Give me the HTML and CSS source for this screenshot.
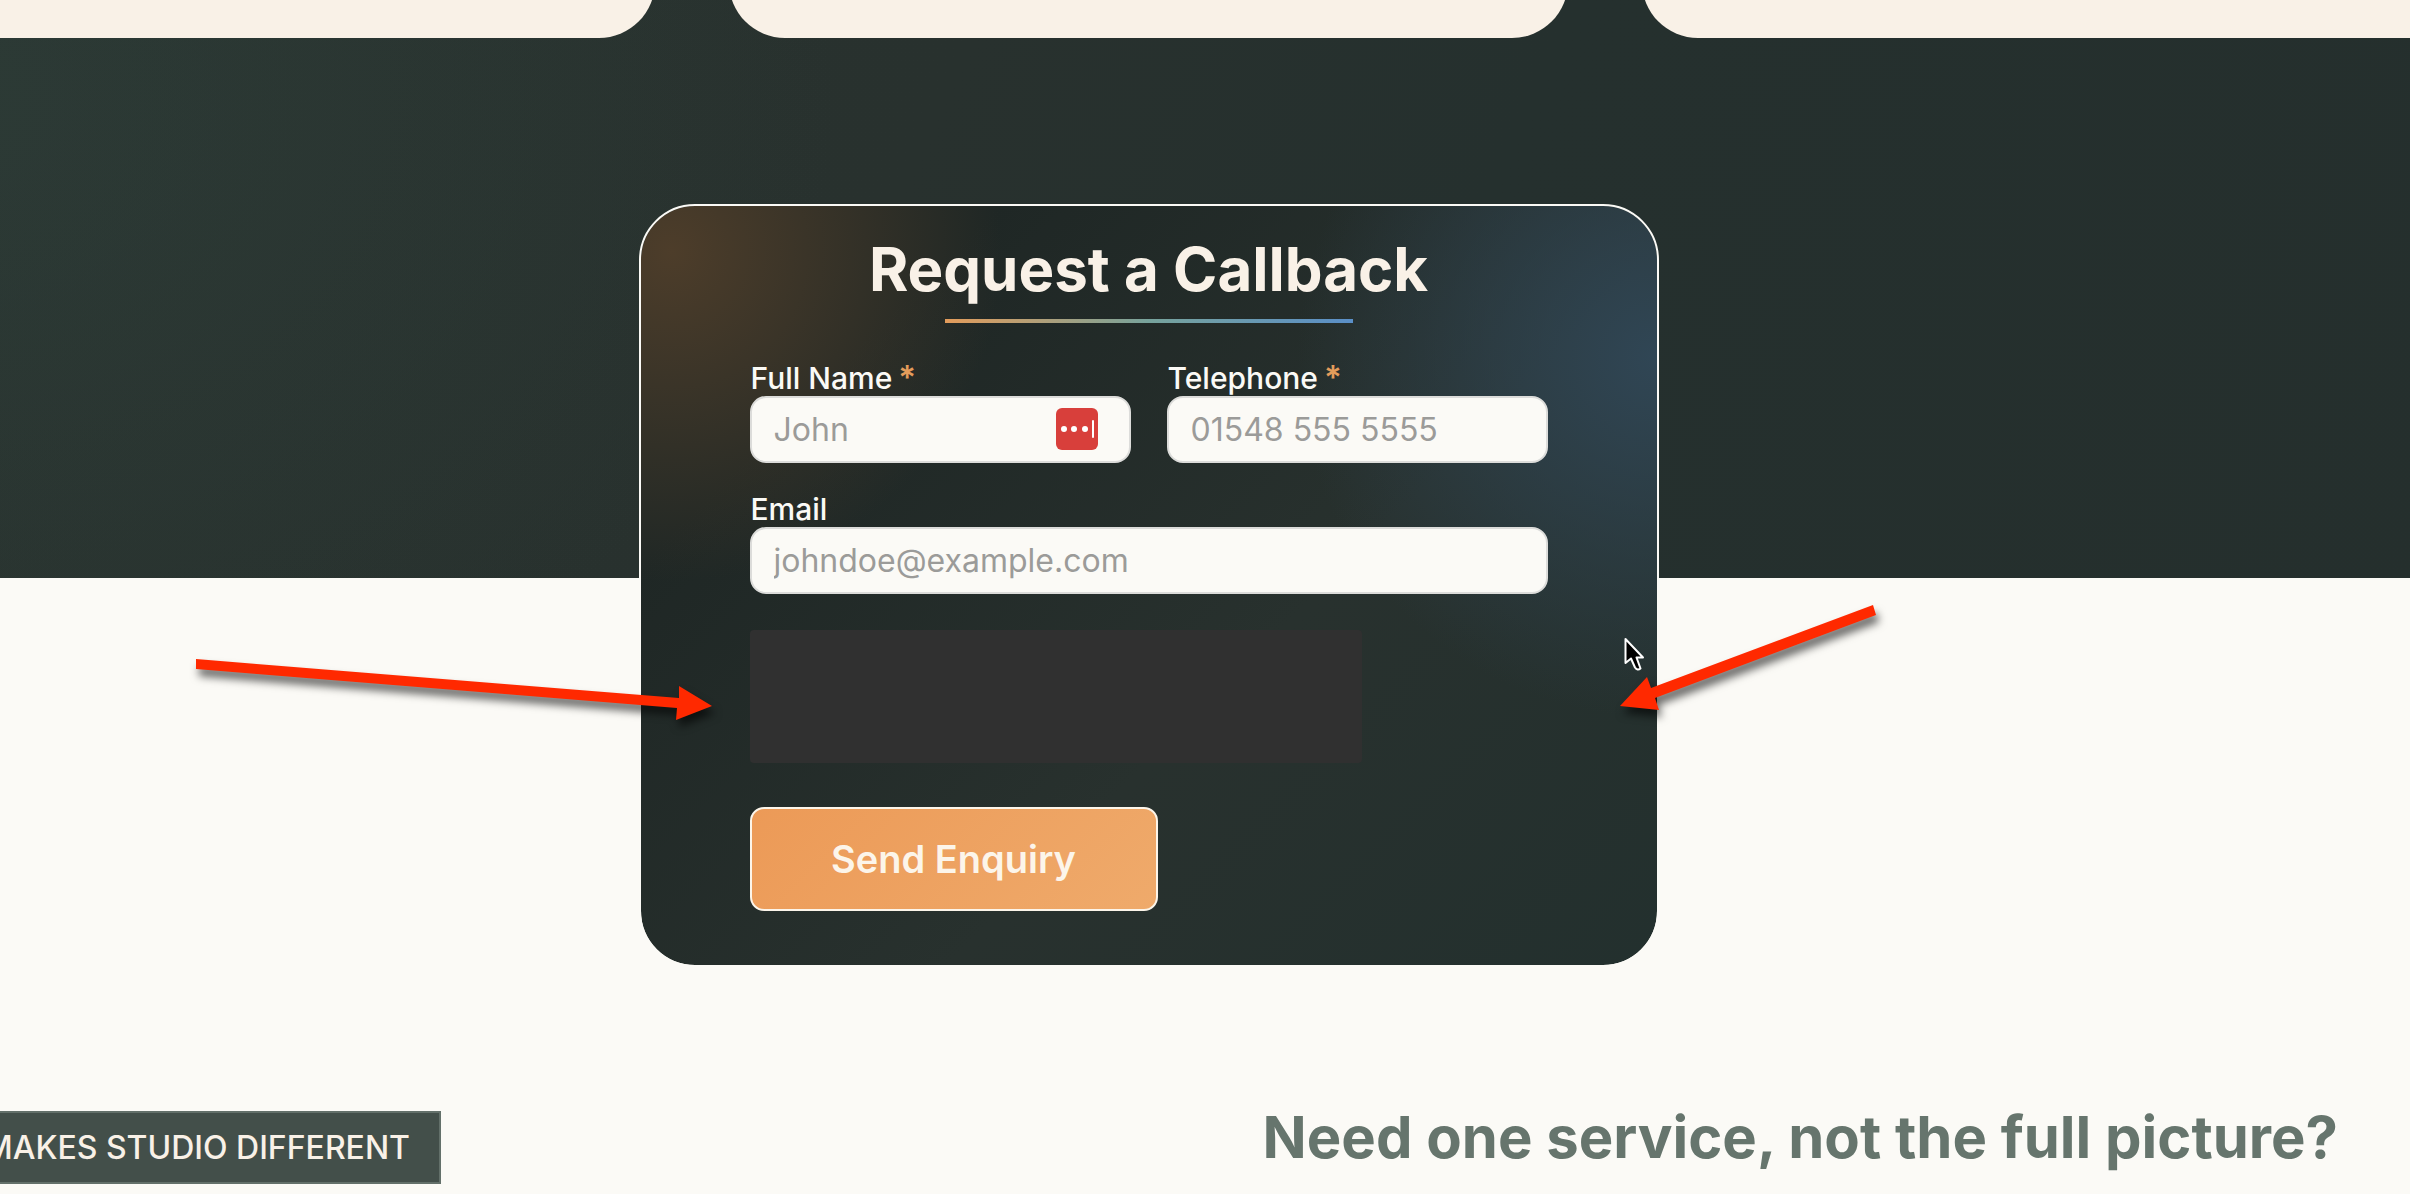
FILE: index.html
```html
<!DOCTYPE html>
<html lang="en">
<head>
    <meta charset="UTF-8">
    <meta name="viewport" content="width=device-width, initial-scale=1.0">
    <title>Request a Callback</title>
    <link rel="stylesheet" href="styles.css">
</head>
<body>
    <div class="page">
        <section class="hero">
            <div class="service-card"></div>
            <div class="service-card"></div>
            <div class="service-card"></div>
        </section>

        <!-- Callback form, overlaps the hero -->
        <section class="callback">
            <h2 class="callback-title">Request a Callback</h2>
            <div class="callback-rule"></div>
            <form class="callback-form">
                <div class="field">
                    <label for="fullName">Full Name<span class="required">*</span></label>
                    <div class="input-wrap">
                        <input type="text" id="fullName" placeholder="John" required>
                        <button type="button" class="autofill" aria-label="Fill from password manager">
                            <svg viewBox="0 0 42 42">
                                <circle cx="8" cy="21" r="3"/>
                                <circle cx="18" cy="21" r="3"/>
                                <circle cx="29" cy="21" r="3"/>
                                <rect x="36" y="12" width="2" height="18" rx="1"/>
                            </svg>
                        </button>
                    </div>
                </div>
                <div class="field">
                    <label for="telephone">Telephone<span class="required">*</span></label>
                    <input type="tel" id="telephone" placeholder="01548 555 5555" required>
                </div>
                <div class="field field-wide">
                    <label for="email">Email</label>
                    <input type="email" id="email" placeholder="johndoe@example.com">
                </div>
                <div class="captcha"></div>
                <button type="submit" class="send">Send Enquiry</button>
            </form>
        </section>
    </div>

    <section class="studio">
        <div class="tag"><span>MAKES STUDIO DIFFERENT</span></div>
        <h2 class="studio-title">Need one service, not the full picture?</h2>
    </section>

    <!-- Arrows and pointer over the page -->
    <svg class="overlay" width="1900" height="760" viewBox="0 0 1900 760" aria-hidden="true">
        <g class="arrow">
            <path d="M196 659 L679 698 L679 686 L712 706 L676 720 L677 708 L196 669 Z"/>
        </g>
        <g class="arrow">
            <path d="M1873 605 L1651 688 L1647 677 L1620 706 L1659 710 L1655 698 L1876 615 Z"/>
        </g>
        <path class="pointer" d="M1625.500 639 V663 L1631 658.500 L1635 667.500 Q1637.500 671 1640.500 668.500 L1636.500 657.500 H1643 Z"/>
    </svg>
</body>
</html>
```
FILE: styles.css
```css
* {
    box-sizing: border-box;
}
body {
    margin: 0;
    position: relative;
    overflow: hidden;
    background-color: #fbfaf6;
    font-family: Inter, "Liberation Sans", sans-serif;
}
h2 {
    margin: 0;
}
.page {
    /* the page runs off both sides of the window */
    margin: 0 -70px 0 -183px;
}
.hero {
    display: grid;
    grid-template-columns: repeat(3, 1fr);
    grid-template-rows: 38px;
    align-items: end;
    gap: 74px;
    padding-bottom: 540px;
    background:
        radial-gradient(ellipse 900px 700px at 120px 100px, rgba(50, 72, 66, 0.35), transparent),
        linear-gradient(115deg, #29332f, #28312e 40%, #25302e 60%, #252f2d);
}
.service-card {
    height: 200px;
    background-color: #f9f1e7;
    border-radius: 56px;
}
.callback {
    max-width: 1020px;
    margin: -374px auto 0;
    padding: 28px 109px 54px;
    border: 2px solid #fbfaf6;
    border-radius: 56px;
    background:
        radial-gradient(circle 330px at 3% 6%, #4d3d2a, transparent),
        radial-gradient(circle 360px at 100% 20%, #304655, transparent),
        linear-gradient(135deg, #1f2725, #1f2725 20%, #28312e 60%, #23302e);
    background-clip: padding-box;
}
.callback-title {
    color: #f9f1e7;
    font-size: 60px;
    line-height: 70px;
    font-weight: 700;
    text-align: center;
}
.callback-rule {
    width: 408px;
    height: 4px;
    margin: 15px auto 37px;
    background: linear-gradient(90deg, #e39c5b, #77a39c 50%, #5a8fc8);
}
.callback-form {
    display: grid;
    grid-template-columns: 1fr 1fr;
    column-gap: 36px;
    row-gap: 28px;
}
.field-wide {
    grid-column: 1 / -1;
}
label {
    display: block;
    height: 36px;
    padding-left: 1px;
    color: #fbfaf6;
    font-size: 30px;
    line-height: 36px;
    font-weight: 500;
}
.required {
    margin-left: 6px;
    color: #e39c5b;
    font-size: 33px;
    line-height: 0;
    font-weight: 600;
}
.input-wrap {
    position: relative;
}
input {
    display: block;
    width: 100%;
    height: 67px;
    padding: 0 22px;
    border: 2px solid #dcdcda;
    border-radius: 16px;
    background-color: #fbfaf6;
    color: #28312e;
    font-family: inherit;
    font-size: 32px;
}
input::placeholder {
    color: #9b9b99;
    opacity: 1;
}
.autofill {
    position: absolute;
    top: 12px;
    right: 33px;
    width: 42px;
    height: 42px;
    padding: 0;
    border: none;
    border-radius: 6px;
    background-color: #d83f3b;
    cursor: pointer;
}
.autofill svg {
    display: block;
    fill: #fff;
}
.captcha {
    grid-column: 1 / -1;
    width: 612px;
    height: 133px;
    margin: 8px 0 16px;
    border-radius: 4px;
    background-color: #303030;
}
.send {
    grid-column: 1 / -1;
    justify-self: start;
    width: 408px;
    height: 104px;
    border: 2px solid #fcf5ea;
    border-radius: 14px;
    background: linear-gradient(135deg, #ec9a57, #efaa6b);
    color: #fcf5ea;
    font-family: inherit;
    font-size: 38px;
    font-weight: 600;
    cursor: pointer;
}
.studio {
    display: flex;
    justify-content: space-between;
    align-items: flex-start;
    padding: 144px 72px 10px 0;
}
.tag {
    display: flex;
    justify-content: flex-end;
    width: 441px;
    padding: 0 29px;
    border: 2px solid #63706a;
    border-left: none;
    background-color: #434f4a;
    color: #f9f1e7;
    font-size: 32px;
    line-height: 69px;
    font-weight: 500;
    white-space: nowrap;
}
.studio-title {
    color: #66756d;
    font-size: 58px;
    line-height: 52px;
    font-weight: 700;
}
.overlay {
    position: absolute;
    top: 0;
    left: 0;
    pointer-events: none;
}
.arrow {
    fill: #ff2900;
    filter: drop-shadow(3px 7px 4px rgba(0, 0, 0, 0.6));
}
.pointer {
    fill: #000;
    stroke: #fff;
    stroke-width: 2;
    stroke-linejoin: round;
}
```
